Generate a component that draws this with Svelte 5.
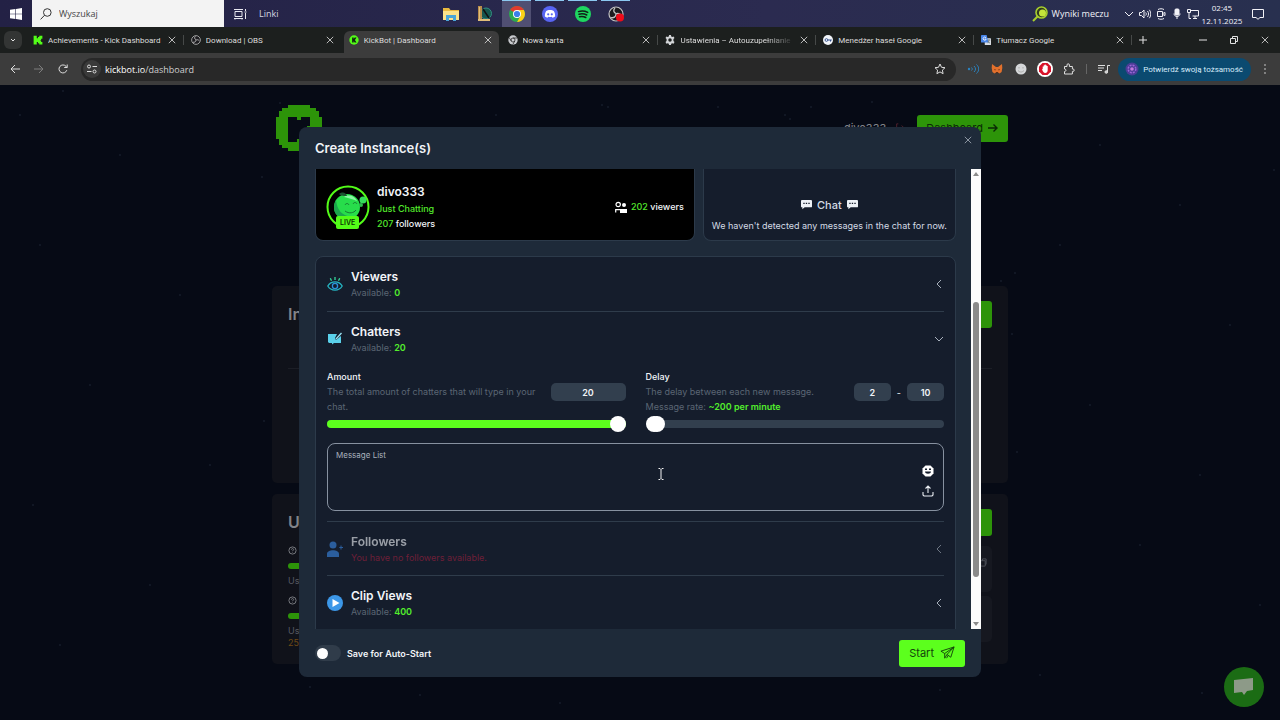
<script>
    let amount = $state(20);
    let delayMin = $state(2);
    let delayMax = $state(10);
    let autoStart = $state(false);
    let messages = $state("");
    let search = $state("");

    const tabs = [
        { title: "Achievements - Kick Dashboard", icon: "kick", sep: true },
        { title: "Download | OBS", icon: "obs" },
        { title: "KickBot | Dashboard", icon: "kickbot", active: true },
        { title: "Nowa karta", icon: "chrome", sep: true },
        { title: "Ustawienia – Autouzupełnianie", icon: "gear", sep: true, fade: true },
        { title: "Menedżer haseł Google", icon: "key", sep: true },
        { title: "Tłumacz Google", icon: "translate", sep: true }
    ];

    const apps = [
        { name: "Eksplorator", icon: "folder" },
        { name: "Biblioteka", icon: "library" },
        { name: "Chrome", icon: "chromeColor", open: true, active: true },
        { name: "Discord", icon: "discord", open: true },
        { name: "Spotify", icon: "spotify", open: true },
        { name: "OBS Studio", icon: "obsRec", open: true }
    ];

    const stars = [
        [63, 6], [280, 18], [602, 20], [608, 22], [496, 30], [872, 17], [811, 22], [718, 22], [785, 30],
        [790, 34], [262, 92], [120, 70], [40, 160], [180, 210], [90, 300], [210, 380], [33, 420],
        [150, 500], [264, 336], [60, 560], [310, 602], [420, 610], [940, 605], [560, 618], [1100, 60],
        [1180, 120], [1060, 160], [1015, 188], [1001, 196], [1012, 249], [1230, 240], [1090, 320],
        [1200, 390], [1017, 367], [1140, 460], [1260, 520], [1040, 590], [1202, 608], [1274, 85], [20, 30]
    ];

    let fill = $derived((amount / 20) * 100);
</script>

{#snippet icon(name)}
    <svg class="icon" viewBox="0 0 16 16" aria-hidden="true">
        {#if name === "kick"}
            <path fill="#53fc18" d="M1 1h5v4h2V3h2V1h5v5h-2v2h-1v1h1v2h2v4h-5v-2H8v-2H6v4H1z" />
        {:else if name === "obs" || name === "obsRec"}
            <circle cx="8" cy="8" r="7" fill="#1c1c1f" stroke="#c4c4c4" stroke-width="1.2" />
            <path fill="none" stroke="#c4c4c4" stroke-width="1.3" d="M7 2c-2 2-1.500 4.500 1 5.500M13.500 9.500C12 7.500 9.500 7 8 8M3 11.500c2.500.8 5-.6 5-3.500" />
            {#if name === "obsRec"}<circle cx="12" cy="11.500" r="4" fill="#ee0c1a" />{/if}
        {:else if name === "kickbot"}
            <circle cx="8" cy="8" r="7.500" fill="#53fc18" />
            <path fill="#102010" d="M5 4h2.500v2.500L9 4h3l-2.500 4L12 12H9L7.500 9.500V12H5z" />
        {:else if name === "chrome"}
            <circle cx="8" cy="8" r="7.500" fill="#c9cbce" />
            <circle cx="8" cy="8" r="3.200" fill="#c9cbce" stroke="#222" stroke-width="1.200" />
            <path fill="none" stroke="#222" stroke-width="1.200" d="M8 4.800h7M5.200 9.600 1.800 4M10.800 9.600 7.500 15.500" />
        {:else if name === "gear"}
            <path fill="#d3d5d8" fill-rule="evenodd" d="M6.500 0h3l.5 2.200 1.500.8 2.200-.8 1.500 2.600L13.500 6.500v3l1.700 1.700-1.500 2.600-2.200-.8-1.500.8L9.500 16h-3L6 13.800 4.500 13l-2.200.8L.8 11.200l1.700-1.700v-3L.8 4.800l1.500-2.600 2.200.8L6 2.200zM8 5.200a2.800 2.800 0 100 5.600 2.800 2.800 0 000-5.600z" />
        {:else if name === "key"}
            <circle cx="8" cy="8" r="8" fill="#f1f4f9" />
            <circle cx="5.500" cy="8" r="2.200" fill="none" stroke="#34518d" stroke-width="1.500" />
            <path stroke="#34518d" stroke-width="1.600" d="M8 8h6M12 8v2.500" />
        {:else if name === "translate"}
            <rect x="6" y="5" width="10" height="11" rx="1" fill="#d9dde3" />
            <path fill="#4a86e8" d="M1 0h8l3 12H1a1 1 0 01-1-1V1a1 1 0 011-1z" />
            <path fill="none" stroke="#fff" stroke-width="1.300" d="M8 4.500a2.500 2.500 0 10.300 2H6" />
            <path fill="none" stroke="#566" stroke-width="1" d="M10.500 8H15M12.800 7v1c0 2-1 4-2 5M11 10c1 1.500 2 2.500 3.500 3" />
        {:else if name === "folder"}
            <path fill="#e9b93f" d="M0 2h6l1.500 2H16v10H0z" />
            <path fill="#fbe28a" d="M0 5h16v9H0z" />
            <path fill="#4aa5d8" d="M3 9h10v6h-3v-3H6v3H3z" />
        {:else if name === "library"}
            <circle cx="10" cy="7.500" r="5.500" fill="#16564f" stroke="#338f80" />
            <path fill="#b98d4b" d="M2 0h4v14H2z" />
            <path fill="#e0bd7a" d="M3 1h1v12H3zM2 13h12v2H2z" />
            <path stroke="#111" stroke-width="1.500" d="m7 3 6 9" />
        {:else if name === "chromeColor"}
            <circle cx="8" cy="8" r="8" fill="#2da94f" />
            <path fill="#e33b2e" d="M8 8 1.100 4A8 8 0 0114.900 4z" />
            <path fill="#fdd017" d="M8 4h6.900A8 8 0 018 16l3.500-6z" />
            <circle cx="8" cy="8" r="4" fill="#fff" />
            <circle cx="8" cy="8" r="3.100" fill="#3c7fe8" />
        {:else if name === "discord"}
            <circle cx="8" cy="8" r="8" fill="#5865f2" />
            <path fill="#fff" d="M5.800 4.300c1.400-.4 3-.4 4.400 0l1.600.6c1 1.600 1.500 3.500 1.300 5.600-.8.600-1.600 1-2.600 1.200l-.7-1c-1.200.3-2.400.3-3.600 0l-.7 1c-1-.2-1.800-.6-2.600-1.200-.2-2.100.3-4 1.300-5.600z" />
            <circle cx="6.200" cy="8.300" r="1.100" fill="#5865f2" />
            <circle cx="9.800" cy="8.300" r="1.100" fill="#5865f2" />
        {:else if name === "spotify"}
            <circle cx="8" cy="8" r="8" fill="#1ed760" />
            <path fill="none" stroke="#102117" stroke-linecap="round" stroke-width="1.500" d="M3.500 5.600c3-.9 6.500-.6 9.200.8M4 8.200c2.600-.7 5.500-.4 7.800.8M4.500 10.700c2.200-.5 4.400-.3 6.300.8" />
        {/if}
    </svg>
{/snippet}

{#snippet cross()}
    <svg class="cross" viewBox="0 0 10 10" aria-hidden="true"><path d="m1 1 8 8M9 1 1 9" /></svg>
{/snippet}

{#snippet chevron(open)}
    <svg class="chevron" class:open viewBox="0 0 10 10" aria-hidden="true"><path d="M7 1 3 5l4 4" /></svg>
{/snippet}

{#snippet bubble()}
    <svg class="bubble" viewBox="0 0 12 10" aria-hidden="true">
        <path fill="#eef2f7" d="M1 0h10a1 1 0 011 1v6a1 1 0 01-1 1H4L1.500 10V8H1a1 1 0 01-1-1V1a1 1 0 011-1z" />
        <path fill="#151d2c" d="M2.500 3h1.500v1.500H2.500zM5.200 3h1.500v1.500H5.200zM8 3h1.500v1.500H8z" />
    </svg>
{/snippet}

<div class="screen">
    <header class="taskbar">
        <button class="start-menu" aria-label="Start menu">
            <svg viewBox="0 0 12 12"><path fill="#fff" d="M0 1.700 5.400 1v4.700H0zM6 .9 12 0v5.700H6zM0 6.300h5.400V11L0 10.300zM6 6.300h6V12l-6-.9z" /></svg>
        </button>
        <label class="search">
            <svg viewBox="0 0 12 12"><circle cx="7.300" cy="4.500" r="3.800" /><path d="M4.600 7.200.6 11.400" /></svg>
            <input type="text" placeholder="Wyszukaj" aria-label="Wyszukaj" bind:value={search} />
        </label>
        <button class="links">
            <svg viewBox="0 0 13 12"><path d="M1 3.500h7v5H1zM1 1v1M8 1v1M1 10.500v1M8 10.500v1M0 1.500h9M0 10.500h9M11.500 1v2M11.500 5v6M10.500 4h2" /></svg>
            Linki
        </button>
        <nav class="apps">
            {#each apps as app}
                <button class:open={app.open} class:active={app.active} aria-label={app.name}>
                    {@render icon(app.icon)}
                </button>
            {/each}
        </nav>
        <div class="tray">
            <button class="score">
                <svg viewBox="0 0 16 16"><circle cx="9.500" cy="6.500" r="5.500" fill="#323c20" stroke="#a8cf2d" stroke-width="1.600" /><path stroke="#a8cf2d" stroke-width="2" d="M5.500 10.500 1 15" /><circle cx="10.500" cy="7" r="3.500" fill="#c5e43a" /></svg>
                Wyniki meczu
            </button>
            <svg class="tray-icon" viewBox="0 0 12 12"><path d="m2 4 4 4 4-4" /></svg>
            <svg class="tray-icon" viewBox="0 0 12 12"><path d="M.5 4.500h2L5 2v8L2.500 7.500h-2zM6.700 4.500c.8 1 .8 2 0 3M8.500 3c1.400 2 1.400 4 0 6M10.300 1.800c2 2.800 2 5.600 0 8.400" /></svg>
            <svg class="tray-icon" viewBox="0 0 12 12"><path d="M2.500 3.500h5v5h-5zM7.500 5.500l2.500-1v3l-2.500-1M3 1.500c2-1 4-1 6 0M3 10.500c2 1 4 1 6 0" /></svg>
            <svg class="tray-icon" viewBox="0 0 12 12"><rect x="4" y="1" width="4" height="6" rx="1" fill="#f2f2f7" /><path d="M3 5.500c0 4 6 4 6 0M6 8.500V11" /></svg>
            <svg class="tray-icon" viewBox="0 0 12 12"><path d="M3.500 2.500h8v5.500h-6M6 10.500h4M8 8v2.500M.5 1.500h3v3h-3zM2 4.500v6h2" /></svg>
            <time class="clock"><span>02:45</span><span>12.11.2025</span></time>
            <svg class="notify" viewBox="0 0 12 12"><path d="M.5 1.500h11v8H8L6 11.300 4 9.500H.5z" /></svg>
        </div>
    </header>

    <div class="tabstrip">
        <button class="tab-search" aria-label="Search tabs">
            <svg viewBox="0 0 8 8"><path d="m2 3 2 2 2-2" /></svg>
        </button>
        <div class="tabs">
            {#each tabs as tab}
                <div class="tab" class:active={tab.active} class:sep={tab.sep}>
                    {@render icon(tab.icon)}
                    <span class="tab-title" class:fade={tab.fade}>{tab.title}</span>
                    <button class="tab-close" aria-label="Close tab">{@render cross()}</button>
                </div>
            {/each}
        </div>
        <button class="new-tab" aria-label="New tab"><svg viewBox="0 0 8 8"><path d="M4 0v8M0 4h8" /></svg></button>
        <div class="window-controls">
            <button aria-label="Minimize"><svg viewBox="0 0 8 8"><path d="M0 4h8" /></svg></button>
            <button aria-label="Restore"><svg viewBox="0 0 8 8"><path d="M.5 2.500h5v5h-5zM2.500 2V.5h5v5H6" /></svg></button>
            <button aria-label="Close">{@render cross()}</button>
        </div>
    </div>

    <div class="toolbar">
        <button aria-label="Back"><svg viewBox="0 0 12 12"><path d="M11 6H2M6 2 2 6l4 4" /></svg></button>
        <button class="dim" aria-label="Forward"><svg viewBox="0 0 12 12"><path d="M1 6h9M6 2l4 4-4 4" /></svg></button>
        <button aria-label="Reload"><svg viewBox="0 0 12 12"><path d="M9.800 7.200A4 4 0 119 3.300L10 4.500M10.200 1.500v3h-3" /></svg></button>
        <div class="omnibox">
            <span class="site-info"><svg viewBox="0 0 12 12"><path d="M6.500 3.500H11M1 8.500h4.500" /><circle cx="3" cy="3.500" r="1.500" /><circle cx="8.500" cy="8.500" r="1.500" /></svg></span>
            <span class="url"><b>kickbot.io</b>/dashboard</span>
            <svg class="star" viewBox="0 0 12 12"><path d="m6 1 1.500 3.300 3.500.4-2.600 2.400.7 3.600L6 8.900l-3.100 1.800.7-3.600L1 4.700l3.500-.4z" /></svg>
        </div>
        <div class="extensions">
            <button aria-label="Audio"><svg viewBox="0 0 12 12"><path stroke="#2b83c0" d="M4.500 4.500c1 1 1 2 0 3M7 3c2 2 2 4 0 6M9.500 1.500c3 3 3 6 0 9" /><circle cx="2" cy="6" r="1.200" fill="#2b83c0" stroke="none" /></svg></button>
            <button aria-label="Wallet"><svg viewBox="0 0 12 12"><path fill="#e2702c" stroke="none" d="m1 1 4 3h2l4-3 .3 4-.7 4-2 1.500L7 9.500H5L3.400 10.500l-2-1.500L.7 5z" /><path fill="#572a14" stroke="none" d="m3 6 2 .7L4 7.500zM9 6l-2 .7 1 .8zM5 9h2l-.4 1.500H5.400z" /></svg></button>
            <button aria-label="Extension"><svg viewBox="0 0 12 12"><circle cx="6" cy="6" r="5.500" fill="#d5d7d9" stroke="none" /><path stroke="#aaa" d="M3 7.500c2 2 4 2 6 0M4 4v1.500M8 4v1.500" /></svg></button>
            <button aria-label="Ad blocker"><svg class="large" viewBox="0 0 16 16"><circle cx="8" cy="8" r="8" fill="#fff" stroke="none" /><path fill="#d8132a" stroke="none" d="M5.500 2h5L14 5.500v5L10.500 14h-5L2 10.500v-5z" /><path fill="#fff" stroke="none" d="M5.700 5.500h1V4.200h1V3.600h1v.6h1v.8h1v4c0 2-1 3-2.500 3S6 11 5 8.300l.7-.3z" /></svg></button>
            <button aria-label="Extensions"><svg viewBox="0 0 12 12"><path d="M1.500 3.500H4V2a1.200 1.200 0 012.400 0v1.500h3V6h.6a1.200 1.200 0 010 2.400h-.6V11H1.500V8.500c2 0 2-2.500 0-2.500z" /></svg></button>
            <span class="divider"></span>
            <button aria-label="Media"><svg viewBox="0 0 12 12"><path d="M0 2.500h7M0 5h6M0 7.500h4M9.500 9V2.500H12" /><circle cx="8.300" cy="9" r="1.300" fill="#ccc" /></svg></button>
        </div>
        <button class="profile">
            <svg viewBox="0 0 14 14"><circle cx="7" cy="7" r="6.500" fill="#4c3d97" /><circle cx="7" cy="7" r="3.800" fill="none" stroke="#9a64d6" stroke-dasharray="2 1" stroke-width="1.500" /><circle cx="7" cy="7" r="1.800" fill="#c27bdc" /></svg>
            Potwierdź swoją tożsamość
        </button>
        <button aria-label="Menu"><svg viewBox="0 0 12 12"><path stroke-linecap="round" stroke-width="1.600" d="M6 2v.01M6 6v.01M6 10v.01" /></svg></button>
    </div>

    <main class="page">
        <svg class="sky" aria-hidden="true">
            {#each stars as [x, y]}
                <circle cx="{x / 12.8}%" cy="{y / 6.35}%" r=".7" />
            {/each}
        </svg>

        <div class="container">
            <div class="topbar">
                <svg class="logo" viewBox="0 0 15 15" shape-rendering="crispEdges" aria-label="KickBot">
                    <path fill="#2d9409" d="M4 0h7v1h2v1h1v2h1v7h-1v2h-2v1h-1v1H4v-1H2v-1H1v-2H0V4h1V2h1V1h2z" />
                    <path fill="#070b16" d="M4 4h3v1h1V4h3v3h-1v1H9v2h1v1h1v1H8v-1H7v1H4z" />
                </svg>
                <span class="user">divo333</span>
                <svg class="logout" viewBox="0 0 12 12"><path d="M4 1H2v10h2M8 3l3 3-3 3M11 6H5" /></svg>
                <a class="dash-btn" href="#dashboard">Dashboard
                    <svg viewBox="0 0 12 12"><path d="M1 6h9M6.500 2.500 10 6l-3.500 3.500" /></svg>
                </a>
            </div>

            <section class="box instances">
                <div class="box-head"><h1>Instances</h1><button aria-label="Create"></button></div>
                <hr />
            </section>

            <section class="box usage">
                <div class="box-head"><h1>Usage</h1><button aria-label="Upgrade"></button></div>
                <div class="usage-grid">
                    {#each ["", "250"] as extra}
                        <div class="meter">
                            <svg viewBox="0 0 10 10"><circle cx="5" cy="5" r="4" /><path d="M3.800 4c0-1.500 2.400-1.500 2.400 0 0 .8-1.200.8-1.200 1.800M5 7v.5" /></svg>
                            <div class="bar"></div>
                            <small>Used</small>
                            {#if extra}<small class="warn">{extra}</small>{/if}
                        </div>
                        <div class="tile">
                            {#if !extra}
                                <svg viewBox="0 0 10 10"><path d="M3 3h5v6H3zM5 3V1h4v6H8" /></svg>
                            {/if}
                        </div>
                    {/each}
                </div>
            </section>
        </div>

        <button class="fab" aria-label="Support chat">
            <svg viewBox="0 0 20 18"><path fill="#8d9a88" d="m0 2 19-2v12l-6 1-3 4-2-3-8 1z" /></svg>
        </button>

        <div class="overlay">
            <div class="modal" role="dialog" aria-labelledby="modal-title">
                <div class="modal-head">
                    <h2 id="modal-title">Create Instance(s)</h2>
                    <button aria-label="Close dialog">{@render cross()}</button>
                </div>

                <div class="modal-body">
                    <div class="content">
                        <div class="cards">
                            <div class="stream">
                                <div class="avatar">
                                    <svg viewBox="0 0 44 44">
                                        <circle cx="22" cy="22" r="20.500" fill="#000" stroke="#53fc18" stroke-width="2" />
                                        <circle cx="21" cy="22" r="13" fill="#27dd4b" />
                                        <path fill="#1ba64c" d="M10 15c-3 6-3 13 3 17 3 2 10 2 13 0-10-1-15-7-16-17z" />
                                        <path fill="#88f7a1" d="M18 12c4-3 11-1 13 4-4-2-9-3-13-4z" />
                                        <path fill="none" stroke="#177b32" d="M19 20c1-2 3-2 4 0M27 19c1-2 3-2 4 0M19 26c4 3 9 2 11-1" />
                                        <path fill="#1b5230" d="M13 9c4-3 7-1 8 2-3 0-6 0-8-2z" />
                                        <circle cx="37" cy="15" r="3.500" fill="#35de5b" />
                                        <circle cx="35" cy="20" r="2" fill="#2bbd4d" />
                                    </svg>
                                    <span>LIVE</span>
                                </div>
                                <div class="who">
                                    <strong>divo333</strong>
                                    <em>Just Chatting</em>
                                    <span><b>207</b> followers</span>
                                </div>
                                <div class="watching">
                                    <svg viewBox="0 0 12 12"><circle cx="3.200" cy="3.500" r="2.200" /><path d="M.7 11.500V8.700h4.600" /><circle cx="9" cy="4" r="2" fill="#fff" stroke="none" /><path fill="#fff" stroke="none" d="M5 8h7v4H5z" /></svg>
                                    <span><b>202</b> viewers</span>
                                </div>
                            </div>
                            <div class="chat">
                                <strong>{@render bubble()} Chat {@render bubble()}</strong>
                                <p>We haven't detected any messages in the chat for now.</p>
                            </div>
                        </div>

                        <div class="panel">
                            <button class="row">
                                <svg class="row-icon" viewBox="0 0 16 16" fill="none" stroke-width="1.300">
                                    <path stroke="#25b6c4" d="M.8 10C4 4.500 12 4.500 15.200 10 12 15.500 4 15.500.8 10z" /><circle cx="8" cy="10" r="2.600" stroke="#2a93dc" />
                                    <path stroke="#35d69b" d="M8 4V1M4.500 4.800 3.300 2.300M11.500 4.800l1.200-2.500" />
                                </svg>
                                <span class="row-text"><strong>Viewers</strong><span>Available: <b>0</b></span></span>
                                {@render chevron(false)}
                            </button>

                            <button class="row">
                                <svg class="row-icon" viewBox="0 0 16 16">
                                    <path fill="#5ad0ea" d="M1 3h9L8 7l1 2 5-4v7H7l-2 1.500V12H2l-1-1z" /><path stroke="#9be3f5" stroke-width="1.300" d="m9 8 5.500-6" />
                                </svg>
                                <span class="row-text"><strong>Chatters</strong><span>Available: <b>20</b></span></span>
                                {@render chevron(true)}
                            </button>

                            <div class="settings">
                                <div class="setting">
                                    <div class="setting-top">
                                        <div>
                                            <label for="amount">Amount</label>
                                            <p>The total amount of chatters that will type in your chat.</p>
                                        </div>
                                        <input class="num wide" id="amount" type="text" bind:value={amount} />
                                    </div>
                                    <div class="slider">
                                        <div class="fill" style="width: {fill}%"></div>
                                        <input type="range" min="0" max="20" aria-label="Amount" bind:value={amount} />
                                    </div>
                                </div>
                                <div class="setting">
                                    <div class="setting-top">
                                        <div>
                                            <label for="delay">Delay</label>
                                            <p>The delay between each new message.<br />Message rate: <b>~200 per minute</b></p>
                                        </div>
                                        <div class="pair">
                                            <input class="num" id="delay" type="text" bind:value={delayMin} />
                                            <span>-</span>
                                            <input class="num" type="text" aria-label="Maximum delay" bind:value={delayMax} />
                                        </div>
                                    </div>
                                    <div class="slider">
                                        <input type="range" min="2" max="600" aria-label="Minimum delay" bind:value={delayMin} />
                                        <input type="range" min="2" max="600" aria-label="Maximum delay" bind:value={delayMax} />
                                    </div>
                                </div>
                            </div>

                            <div class="messages">
                                <label for="messages">Message List</label>
                                <textarea id="messages" bind:value={messages}></textarea>
                                <div class="tools">
                                    <button aria-label="Emoji"><svg viewBox="0 0 12 12"><path fill="#fff" d="M3.500.5h5l3 3v5l-3 3h-5l-3-3v-5z" /><path fill="#151d2c" d="M3 3.500h2V5H3zM7 3.500h2V5H7zM3 6.500h6c0 3-6 3-6 0z" /></svg></button>
                                    <button aria-label="Upload"><svg viewBox="0 0 12 12"><path fill="none" stroke="#e8ecf1" stroke-width="1.100" d="M6 8V1M3.500 3.500 6 1l2.500 2.500M1 7v3l1 1h8l1-1V7" /></svg></button>
                                </div>
                                <svg class="caret" viewBox="0 0 6 12" aria-hidden="true"><path fill="none" stroke="#f5f5f5" d="M.5.500h1.500l1 1 1-1h1.500M3 1.500v9M.5 11.500h1.500l1-1 1 1h1.500" /></svg>
                            </div>

                            <button class="row disabled" disabled>
                                <svg class="row-icon" viewBox="0 0 16 16">
                                    <circle cx="6" cy="4" r="3.500" fill="#3b8ae8" /><path fill="#3b8ae8" d="M0 16v-3c0-5 12-5 12 0v3zM12.300 6h1.200V4.500h1V6H16v1h-1.500v1.500h-1V7h-1.200z" />
                                </svg>
                                <span class="row-text"><strong>Followers</strong><span class="error">You have no followers available.</span></span>
                                {@render chevron(false)}
                            </button>

                            <button class="row">
                                <svg class="row-icon" viewBox="0 0 16 16"><circle cx="8" cy="8" r="8" fill="#3c97e8" /><path fill="#fff" d="M5.500 4v8l7-4z" /></svg>
                                <span class="row-text"><strong>Clip Views</strong><span>Available: <b>400</b></span></span>
                                {@render chevron(false)}
                            </button>
                        </div>
                    </div>
                    <div class="scrollbar" aria-hidden="true">
                        <svg viewBox="0 0 10 10"><path d="M2 7h6L5 3z" /></svg>
                        <div class="rail"><div class="thumb"></div></div>
                        <svg viewBox="0 0 10 10"><path d="M2 3h6L5 7z" /></svg>
                    </div>
                </div>

                <div class="modal-foot">
                    <label class="switch">
                        <input type="checkbox" bind:checked={autoStart} />
                        Save for Auto-Start
                    </label>
                    <button class="start">Start
                        <svg viewBox="0 0 16 14"><path d="M15 1 1 5.500l4 2.500L15 1l-3.500 11-4-3L15 1M5 8v5l2.500-4M8.800 10 7 13" /></svg>
                    </button>
                </div>
            </div>
        </div>
    </main>
</div>

<style>
    :global(body) {
        background: #060a15;
    }

    * {
        box-sizing: border-box;
    }

    button, input, textarea {
        font: inherit;
        color: inherit;
        border: 0;
        padding: 0;
        margin: 0;
        background: none;
    }

    h1, h2, p, hr {
        margin: 0;
    }

    svg {
        flex: none;
        display: block;
    }

    .screen {
        display: flex;
        flex-direction: column;
        height: 100vh;
        overflow: hidden;
        font-family: "Open Sans", "Noto Sans", sans-serif;
        font-size: 8px;
        color: #e3e3e3;
    }

    /* windows taskbar */
    .taskbar {
        display: flex;
        flex: none;
        height: 27px;
        background: linear-gradient(90deg, #232145, #2b2b50 60%, #28304f);
        font-size: 9px;
        color: #f2f2f7;
    }

    .start-menu {
        width: 32px;
        display: grid;
        place-items: center;
    }

    .start-menu svg {
        width: 12px;
    }

    .search {
        display: flex;
        align-items: center;
        gap: 7px;
        width: 192px;
        padding: 0 8px;
        background: #f3f3f3;
        color: #444;
    }

    .search svg {
        width: 12px;
        fill: none;
        stroke: #333;
    }

    .search input {
        flex: 1;
        min-width: 0;
        outline: none;
    }

    .search input::placeholder {
        color: #444;
    }

    .links {
        display: flex;
        align-items: center;
        gap: 12px;
        width: 210px;
        padding-left: 10px;
        color: #d5d5e0;
    }

    .links svg {
        width: 13px;
        fill: none;
        stroke: #e8e8f0;
    }

    .apps {
        display: flex;
    }

    .apps button {
        display: grid;
        place-items: center;
        width: 29px;
        margin: 0 2px;
        border-top: 1px solid transparent;
    }

    .apps .icon {
        width: 16px;
        height: 16px;
    }

    .apps .open {
        border-top-color: #8cc8f0;
    }

    .apps .active {
        background: #504f72;
    }

    .tray {
        display: flex;
        align-items: center;
        gap: 4px;
        margin-left: auto;
        padding-right: 16px;
    }

    .score {
        display: flex;
        align-items: center;
        gap: 4px;
        margin-right: 10px;
    }

    .score svg {
        width: 16px;
    }

    .tray-icon, .notify {
        width: 12px;
        fill: none;
        stroke: #f2f2f7;
    }

    .clock {
        display: flex;
        flex-direction: column;
        align-items: center;
        width: 38px;
        font-size: 8px;
        line-height: 13px;
    }

    .notify {
        margin-left: 7px;
    }

    /* browser chrome */
    .tabstrip {
        display: flex;
        flex: none;
        align-items: center;
        height: 26px;
        padding: 4px 0 0 4px;
        background: #1c1f1e;
        color: #dcdcdc;
        font-family: Roboto, "Open Sans", sans-serif;
    }

    .tab-search {
        display: grid;
        place-items: center;
        width: 18px;
        height: 18px;
        border-radius: 6px;
        background: #333534;
        margin: 0 6px 4px 0;
    }

    .tabstrip svg:not(.icon) {
        width: 8px;
        fill: none;
        stroke: #e3e3e3;
    }

    .tabs {
        display: flex;
        flex: 0 1 1106px;
        min-width: 0;
        align-self: stretch;
    }

    .tab {
        position: relative;
        display: flex;
        flex: 1 1 0;
        min-width: 0;
        align-items: center;
        gap: 5px;
        padding: 0 10px 4px 5px;
    }

    .tab.sep::after {
        content: "";
        position: absolute;
        right: 2px;
        top: 4px;
        height: 10px;
        border-right: 1px solid #464948;
    }

    .tab.active {
        background: #3c3c3c;
        border-radius: 6px 6px 0 0;
        margin-right: 4px;
        flex-basis: -4px;
        padding-right: 7px;
    }

    .tab .icon {
        width: 10px;
        height: 10px;
    }

    .tab-title {
        flex: 1;
        min-width: 0;
        overflow: hidden;
        white-space: nowrap;
    }

    .tab-title.fade {
        mask-image: linear-gradient(90deg, #000 75%, transparent);
    }

    .new-tab {
        margin: 0 0 4px 5px;
    }

    .window-controls {
        display: flex;
        gap: 23px;
        margin: 0 11px 4px auto;
    }

    .toolbar {
        display: flex;
        flex: none;
        align-items: center;
        gap: 12px;
        height: 32px;
        padding: 0 9px;
        background: #3c3c3c;
        font-size: 9px;
    }

    .toolbar svg {
        width: 12px;
        fill: none;
        stroke: #dedede;
    }

    .toolbar .dim {
        opacity: 0.4;
    }

    .omnibox {
        display: flex;
        flex: 1;
        min-width: 0;
        align-items: center;
        gap: 4px;
        height: 23px;
        margin-right: -1px;
        padding: 0 10px 0 2px;
        border-radius: 12px;
        background: #282828;
    }

    .site-info {
        display: grid;
        place-items: center;
        width: 18px;
        height: 18px;
        border-radius: 50%;
        background: #3a3a3a;
    }

    .url {
        flex: 1;
        color: #cfcfcf;
    }

    .url b {
        font-weight: 400;
        color: #fff;
    }

    .extensions {
        display: flex;
        align-items: center;
        gap: 12px;
    }

    .toolbar .large {
        width: 16px;
        margin: 0 -2px;
    }

    .divider {
        height: 10px;
        margin: 0 -1px;
        border-left: 1px solid #666;
    }

    .profile {
        display: flex;
        align-items: center;
        gap: 4px;
        height: 23px;
        margin: 0 -4px;
        padding: 0 8px 0 7px;
        border-radius: 12px;
        background: #0b4a70;
        color: #d6ecfb;
        font-family: Roboto, "Open Sans", sans-serif;
        font-size: 8px;
        white-space: nowrap;
    }

    .profile svg {
        width: 14px;
        stroke: none;
    }

    /* dashboard behind the dialog */
    .page {
        position: relative;
        flex: 1;
        min-height: 0;
        background: #060a15;
        font-family: Inter, "Liberation Sans", sans-serif;
        font-size: 9px;
    }

    .sky {
        position: absolute;
        width: 100%;
        height: 100%;
        fill: #283040;
    }

    .container {
        position: relative;
        max-width: 736px;
        margin: 0 auto;
        padding-top: 20px;
        color: #818389;
    }

    .topbar {
        display: flex;
        align-items: center;
        height: 46px;
        padding-left: 4px;
    }

    .logo {
        width: 46px;
    }

    .user {
        margin-left: auto;
        font-size: 11px;
    }

    .logout {
        width: 10px;
        margin: 0 12px 0 9px;
        fill: none;
        stroke: #5c2430;
    }

    .dash-btn {
        display: flex;
        align-items: center;
        gap: 4px;
        height: 27px;
        padding: 0 9px;
        border-radius: 3px;
        background: #2d9409;
        color: #0a2906;
        font-size: 11px;
        text-decoration: none;
    }

    .dash-btn svg {
        width: 12px;
        fill: none;
        stroke: #0a2906;
        stroke-width: 1.4;
    }

    .box {
        padding: 15px 16px;
        border-radius: 5px;
        background: #10121a;
    }

    .instances {
        height: 197px;
        margin: 135px 0 11px;
    }

    .box-head {
        display: flex;
        align-items: center;
        justify-content: space-between;
    }

    .box-head h1 {
        font-size: 16px;
        line-height: 27px;
        font-weight: 600;
    }

    .box-head button {
        width: 90px;
        height: 27px;
        border-radius: 3px;
        background: #2d9409;
    }

    .box hr {
        margin-top: 40px;
        border: 0;
        border-top: 1px solid #1c1e26;
    }

    .usage {
        height: 170px;
    }

    .usage-grid {
        display: grid;
        grid-template-columns: 1fr 1fr;
        gap: 4px 16px;
        padding-top: 10px;
    }

    .meter {
        display: flex;
        flex-direction: column;
    }

    .meter svg {
        width: 9px;
        fill: none;
        stroke: #818389;
    }

    .meter .bar {
        width: 60px;
        height: 6px;
        margin: 8px 0 6px;
        border-radius: 3px;
        background: #2d9409;
    }

    .meter small {
        font-size: 9px;
        line-height: 12px;
        color: #565961;
    }

    .meter .warn {
        color: #6e4a16;
    }

    .tile {
        display: flex;
        align-items: center;
        justify-content: flex-end;
        height: 46px;
        padding: 0 5px 14px;
        border-radius: 5px;
        background: #161820;
    }

    .tile svg {
        width: 9px;
        fill: none;
        stroke: #50535b;
    }

    .fab {
        position: absolute;
        right: 16px;
        bottom: 13px;
        display: grid;
        place-items: center;
        width: 40px;
        height: 40px;
        border-radius: 50%;
        background: #1b6c14;
    }

    .fab svg {
        width: 20px;
    }

    /* dialog */
    .overlay {
        position: absolute;
        inset: 0;
        display: flex;
        justify-content: center;
        padding: 42px 16px 43px;
        pointer-events: none;
    }

    .modal {
        display: flex;
        flex-direction: column;
        width: 100%;
        max-width: 682px;
        border-radius: 8px;
        background: #1e2a39;
        color: #f1f4f8;
        pointer-events: auto;
    }

    .modal-head {
        display: flex;
        flex: none;
        justify-content: space-between;
        height: 42px;
        padding: 9px 9px 0 16px;
    }

    .modal-head h2 {
        font-size: 13px;
        line-height: 24px;
        font-weight: 600;
    }

    .modal-head button {
        align-self: flex-start;
    }

    .modal-head .cross {
        width: 8px;
    }

    .cross {
        fill: none;
        stroke: #a8b1bd;
    }

    .modal-body {
        display: flex;
        flex: 1;
        min-height: 0;
        overflow: hidden;
    }

    .content {
        flex: 1;
        min-width: 0;
        padding: 0 15px 0 16px;
    }

    .cards {
        display: grid;
        grid-template-columns: 3fr 2fr;
        gap: 8px;
        height: 72px;
        margin-bottom: 15px;
    }

    .stream, .chat, .panel {
        border: 1px solid #2c3a4a;
        background: #151d2c;
    }

    .stream {
        display: flex;
        align-items: center;
        gap: 7px;
        padding: 4px 10px 0;
        border-width: 0 1px 1px;
        border-radius: 0 0 8px 8px;
        background: #000;
    }

    .avatar {
        position: relative;
        width: 44px;
        height: 44px;
    }

    .avatar span {
        position: absolute;
        left: 10px;
        bottom: 0;
        padding: 0 4px;
        border-radius: 2px;
        background: #53fc18;
        color: #0b3305;
        font-size: 7px;
        line-height: 13px;
        font-weight: 600;
    }

    .who {
        display: flex;
        flex: 1;
        flex-direction: column;
        line-height: 15px;
        font-weight: 500;
    }

    .who strong {
        font-size: 12px;
        line-height: 18px;
        font-weight: 600;
    }

    .who em {
        font-style: normal;
    }

    .stream b, .who em {
        font-weight: 500;
        color: #53e82c;
    }

    .watching {
        display: flex;
        align-items: center;
        gap: 4px;
        font-weight: 500;
    }

    .watching svg {
        width: 12px;
        fill: none;
        stroke: #fff;
        stroke-width: 1.2;
    }

    .chat {
        display: flex;
        flex-direction: column;
        align-items: center;
        justify-content: flex-end;
        padding-bottom: 6px;
        border-width: 0 1px 1px;
        border-radius: 0 0 8px 8px;
        color: #d4dbe5;
    }

    .chat strong {
        display: flex;
        align-items: center;
        gap: 5px;
        font-size: 11px;
        line-height: 24px;
        font-weight: 500;
    }

    .chat p {
        line-height: 17px;
        white-space: nowrap;
    }

    .bubble {
        width: 11px;
    }

    .panel {
        padding: 0 11px;
        border-radius: 8px 8px 0 0;
    }

    .row {
        display: flex;
        align-items: center;
        gap: 8px;
        width: 100%;
        height: 54px;
        text-align: left;
    }

    .row + .row, .row.disabled {
        border-top: 1px solid #2f3c4b;
    }

    .row-icon {
        width: 16px;
    }

    .row-text {
        display: flex;
        flex: 1;
        flex-direction: column;
        padding-top: 2px;
        line-height: 16px;
        color: #5b6674;
    }

    .row-text strong {
        font-size: 12px;
        font-weight: 600;
        color: #f1f4f8;
    }

    .row-text b, .setting p b {
        font-weight: 600;
        color: #53ee2c;
    }

    .row.disabled .row-icon, .row.disabled strong, .row.disabled .chevron {
        opacity: 0.6;
    }

    .row-text .error {
        color: #6e1f38;
    }

    .chevron {
        width: 10px;
        fill: none;
        stroke: #a8b1bd;
    }

    .chevron.open {
        transform: rotate(-90deg);
    }

    .settings {
        display: grid;
        grid-template-columns: 1fr 1fr;
        gap: 20px;
        padding: 5px 0 11px;
    }

    .setting-top {
        display: flex;
        align-items: center;
        justify-content: space-between;
        gap: 12px;
        margin-bottom: 2px;
    }

    .setting label {
        display: block;
        line-height: 14px;
        font-weight: 500;
    }

    .setting p {
        line-height: 15px;
        color: #5b6674;
    }

    .num {
        width: 37px;
        height: 18px;
        border-radius: 5px;
        background: #323f4e;
        font-weight: 600;
        text-align: center;
    }

    .num.wide {
        flex: none;
        width: 75px;
    }

    .pair {
        display: flex;
        align-items: center;
        gap: 6px;
    }

    .slider {
        position: relative;
        height: 16px;
    }

    .slider::before, .fill {
        content: "";
        position: absolute;
        left: 0;
        right: 0;
        top: 4px;
        height: 8px;
        border-radius: 4px;
        background: #323f4e;
    }

    .fill {
        background: #5cff1d;
    }

    .slider input {
        position: absolute;
        inset: 0;
        width: 100%;
        height: 16px;
        appearance: none;
    }

    .slider input::-webkit-slider-thumb {
        appearance: none;
        width: 16px;
        height: 16px;
        border-radius: 50%;
        background: #fff;
    }

    .messages {
        position: relative;
        display: flex;
        height: 68px;
        margin-bottom: 10px;
        border: 1px solid #8791a0;
        border-radius: 8px;
    }

    .messages label {
        position: absolute;
        left: 8px;
        top: 4px;
        font-size: 8px;
        line-height: 14px;
        color: #a8b1bd;
    }

    .messages textarea {
        flex: 1;
        padding: 18px 8px 4px;
        resize: none;
        outline: none;
    }

    .tools {
        display: flex;
        flex-direction: column;
        justify-content: flex-end;
        gap: 8px;
        padding: 0 9px 13px;
    }

    .tools svg {
        width: 12px;
    }

    .caret {
        position: absolute;
        left: calc(54% - 2px);
        top: 24px;
        width: 6px;
    }

    .scrollbar {
        display: flex;
        flex-direction: column;
        width: 10px;
        background: #fcfcfc;
    }

    .scrollbar svg {
        width: 10px;
        fill: #8a8a8a;
    }

    .rail {
        display: flex;
        flex: 1;
        flex-direction: column;
        justify-content: flex-end;
        padding: 0 2px 42px;
    }

    .thumb {
        height: 69%;
        border-radius: 3px;
        background: #8a8a8a;
    }

    .modal-foot {
        display: flex;
        flex: none;
        align-items: center;
        justify-content: space-between;
        height: 48px;
        padding: 0 16px;
    }

    .switch {
        display: flex;
        align-items: center;
        gap: 6px;
        font-weight: 600;
    }

    .switch input {
        display: flex;
        align-items: center;
        width: 26px;
        height: 16px;
        padding: 0 2px;
        border-radius: 8px;
        background: #303c4a;
        appearance: none;
    }

    .switch input::before {
        content: "";
        width: 11px;
        height: 11px;
        border-radius: 50%;
        background: #fff;
    }

    .switch input:checked {
        justify-content: flex-end;
        background: #53fc18;
    }

    .start {
        display: flex;
        align-items: center;
        gap: 6px;
        height: 27px;
        padding: 0 10px;
        border-radius: 3px;
        background: #5cff1d;
        color: #14450b;
        font-size: 11px;
    }

    .start svg {
        width: 15px;
        fill: none;
        stroke: #14450b;
    }
</style>
